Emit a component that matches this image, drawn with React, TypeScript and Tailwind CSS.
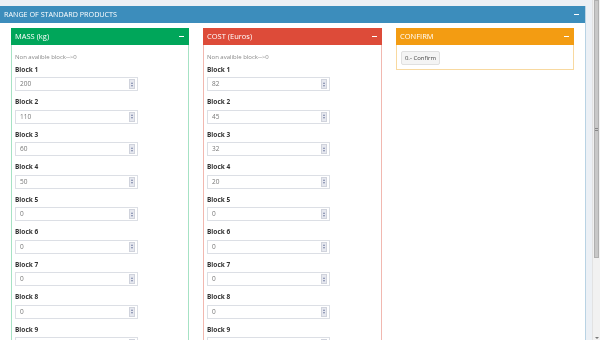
import React from "react";

const mass = ["200", "110", "60", "50", "0", "0", "0", "0", "0"];
const cost = ["82", "45", "32", "20", "0", "0", "0", "0", "0"];

function Minus() {
  return <span className="block w-[5px] h-[1.5px] bg-white" />;
}

function Spinner() {
  return (
    <div className="w-[6px] h-[10px] bg-[#e6e8ef] border border-[#d0d3dc] flex flex-col items-center justify-center gap-[1px]">
      <span className="block w-0 h-0 border-l-[1.5px] border-r-[1.5px] border-b-[2px] border-l-transparent border-r-transparent border-b-[#7b84a8]" />
      <span className="block w-0 h-0 border-l-[1.5px] border-r-[1.5px] border-t-[2px] border-l-transparent border-r-transparent border-t-[#7b84a8]" />
    </div>
  );
}

function Field({ label, value }: { label: string; value: string }) {
  return (
    <div className="mb-[6px]">
      <div className="h-[9px] leading-[9px] text-[6.5px] font-bold text-[#333]">{label}</div>
      <div className="mt-[3.5px] w-[123px] h-[14px] border border-[#dcdfe5] bg-white flex items-center justify-between pl-[4px] pr-[2px]">
        <span className="text-[6.5px] text-[#777]">{value}</span>
        <Spinner />
      </div>
    </div>
  );
}

function Panel({
  title,
  head,
  border,
  values,
}: {
  title: string;
  head: string;
  border: string;
  values: string[];
}) {
  return (
    <div className={`border ${border} bg-white flex flex-col h-[330px]`}>
      <div className={`${head} h-[17px] flex items-center justify-between pl-[4px] pr-[5px] -mx-px -mt-px`}>
        <span className="text-white text-[7.5px]">{title}</span>
        <Minus />
      </div>
      <div className="px-[3px] pt-[8.5px]">
        <div className="h-[8px] leading-[8px] text-[6px] text-[#888] mb-[3.5px]">Non avalible block--&gt;0</div>
        {values.map((v, i) => (
          <Field key={i} label={`Block ${i + 1}`} value={v} />
        ))}
      </div>
    </div>
  );
}

export default function App() {
  return (
    <div
      className="w-[600px] h-[340px] overflow-hidden bg-[#ecf0f5] flex will-change-transform"
      style={{ fontFamily: "'Open Sans', 'Noto Sans', sans-serif" }}
    >
      <div className="w-[592px] flex flex-col pt-[6px]">
        <div className="w-[586px] flex-1 bg-white border-r border-[#b9d3e4] flex flex-col">
          <div className="h-[17px] bg-[#3c8dbc] flex items-center justify-between pl-[4px] pr-[6px]">
            <span className="text-white text-[7.2px]">RANGE OF STANDARD PRODUCTS</span>
            <Minus />
          </div>
          <div className="grid grid-cols-[178px_179px_178px] gap-x-[14px] pl-[11px] pt-[5px] items-start">
            <Panel title="MASS (kg)" head="bg-[#00a65a]" border="border-[#a6e2c4]" values={mass} />
            <Panel title="COST (Euros)" head="bg-[#dd4b39]" border="border-[#f1b8b0]" values={cost} />
            <div className="border border-[#f8d9a0] bg-white flex flex-col">
              <div className="bg-[#f39c12] h-[17px] flex items-center justify-between pl-[4px] pr-[5px] -mx-px -mt-px">
                <span className="text-white text-[7.5px]">CONFIRM</span>
                <Minus />
              </div>
              <div className="flex pl-[4px] pt-[6px] pb-[3.5px]">
                <div className="h-[14px] w-[39px] bg-[#f4f4f4] border border-[#e0e0e0] rounded-[2px] text-[6px] text-[#444] flex items-center justify-center">
                  0.- Confirm
                </div>
              </div>
            </div>
          </div>
        </div>
      </div>
      <div className="w-[8px] h-[340px] bg-[#f1f1f1] flex flex-col border-l border-[#e2e2e2]">
        <div className="h-[258px] bg-[#c8c8c8] border border-[#b0b0b0] mx-[1px] flex items-center justify-center">
          <span className="block w-[4px] h-[3px] border-y border-[#888]" />
        </div>
        <div className="flex-1" />
        <div className="h-[5px] flex items-center justify-center">
          <span className="block w-0 h-0 border-l-[2px] border-r-[2px] border-t-[2px] border-l-transparent border-r-transparent border-t-[#777]" />
        </div>
      </div>
    </div>
  );
}
